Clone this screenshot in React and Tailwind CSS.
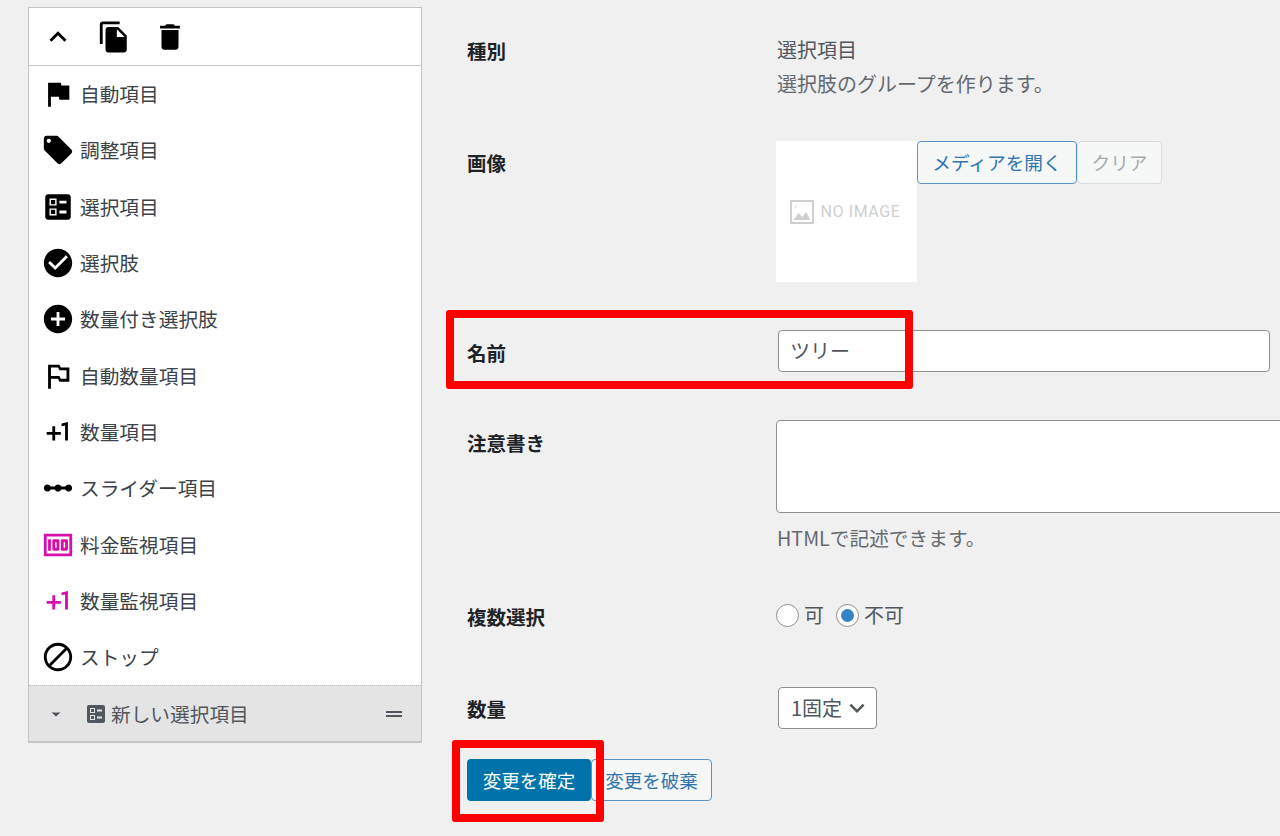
const P = {
  flag: "M14.4 6L14 4H5v17h2v-7h5.6l.4 2h7V6z",
  tag: "M21.41 11.58l-9-9C12.05 2.22 11.55 2 11 2H4c-1.1 0-2 .9-2 2v7c0 .55.22 1.05.59 1.42l9 9c.36.36.86.58 1.41.58.55 0 1.05-.22 1.41-.59l7-7c.37-.36.59-.86.59-1.41 0-.55-.23-1.06-.59-1.42zM5.5 7C4.67 7 4 6.33 4 5.5S4.67 4 5.5 4 7 4.67 7 5.5 6.33 7 5.5 7z",
  ballot: "M13 9.5h5v-2h-5v2zm0 7h5v-2h-5v2zm6 4.5H5c-1.1 0-2-.9-2-2V5c0-1.1.9-2 2-2h14c1.1 0 2 .9 2 2v14c0 1.1-.9 2-2 2zM6 11h5V6H6v5zm1-4h3v3H7V7zM6 18h5v-5H6v5zm1-4h3v3H7v-3z",
  check: "M12 2C6.48 2 2 6.48 2 12s4.48 10 10 10 10-4.48 10-10S17.52 2 12 2zm-2 15l-5-5 1.41-1.41L10 14.17l7.59-7.59L19 8l-9 9z",
  add: "M12 2C6.48 2 2 6.48 2 12s4.48 10 10 10 10-4.48 10-10S17.52 2 12 2zm5 11h-4v4h-2v-4H7v-2h4V7h2v4h4v2z",
  outlinedFlag: "M14 6l-1-2H5v17h2v-7h5l1 2h7V6h-6zm4 8h-4l-1-2H7V6h5l1 2h5v6z",
  plusOne: "M10 8H8v4H4v2h4v4h2v-4h4v-2h-4zm4.5-1.92V7.9l2.5-.5V18h2V5z",
  scale: "M19.5 9.5c-1.03 0-1.9.62-2.29 1.5h-2.92c-.39-.88-1.26-1.5-2.29-1.5s-1.9.62-2.29 1.5H6.79c-.39-.88-1.26-1.5-2.29-1.5C3.12 9.5 2 10.62 2 12s1.12 2.5 2.5 2.5c1.03 0 1.9-.62 2.29-1.5h2.92c.39.88 1.26 1.5 2.29 1.5s1.9-.62 2.29-1.5h2.92c.39.88 1.26 1.5 2.29 1.5 1.38 0 2.5-1.12 2.5-2.5s-1.12-2.5-2.5-2.5z",
  money: "M5 8h2v8H5zm7 0H9c-.55 0-1 .45-1 1v6c0 .55.45 1 1 1h3c.55 0 1-.45 1-1V9c0-.55-.45-1-1-1zm-1 6h-1v-4h1v4zm7-6h-3c-.55 0-1 .45-1 1v6c0 .55.45 1 1 1h3c.55 0 1-.45 1-1V9c0-.55-.45-1-1-1zm-1 6h-1v-4h1v4zM2 4v16h20V4H2zm2 14V6h16v12H4z",
  block: "M12 2C6.48 2 2 6.48 2 12s4.48 10 10 10 10-4.48 10-10S17.52 2 12 2zM4 12c0-4.42 3.58-8 8-8 1.85 0 3.55.63 4.9 1.69L5.69 16.9C4.63 15.55 4 13.85 4 12zm8 8c-1.85 0-3.55-.63-4.9-1.69L18.31 7.1C19.37 8.45 20 10.15 20 12c0 4.42-3.58 8-8 8z",
  copy: "M16 1H4c-1.1 0-2 .9-2 2v14h2V3h12V1zm-1 4l6 6v10c0 1.1-.9 2-2 2H7.99C6.89 23 6 22.1 6 21l.01-14c0-1.1.89-2 1.99-2h7zm-1 7h5.5L14 6.5V12z",
  trash: "M6 19c0 1.1.9 2 2 2h8c1.1 0 2-.9 2-2V7H6v12zM19 4h-3.5l-1-1h-5l-1 1H5v2h14V4z",
  chevronUp: "M12 8l-6 6 1.41 1.41L12 10.83l4.59 4.58L18 14z",
  chevronDown: "M7.41 8.59L12 13.17l4.59-4.58L18 10l-6 6-6-6z",
};

function Icon({ d, className = "w-[34px] h-[34px] text-black" }) {
  return (
    <svg viewBox="0 0 24 24" className={className} fill="currentColor" fillRule="evenodd">
      <path d={d} />
    </svg>
  );
}

const items = [
  [P.flag, "自動項目"],
  [P.tag, "調整項目"],
  [P.ballot, "選択項目"],
  [P.check, "選択肢"],
  [P.add, "数量付き選択肢"],
  [P.outlinedFlag, "自動数量項目"],
  [P.plusOne, "数量項目"],
  [P.scale, "スライダー項目"],
  [P.money, "料金監視項目", true],
  [P.plusOne, "数量監視項目", true],
  [P.block, "ストップ"],
];

function Row({ label, labelClass, className = "", children }) {
  return (
    <div className={`grid grid-cols-[309px_520px] ${className}`}>
      <div className={`font-bold text-[19.5px] text-[#1d2327] ${labelClass}`}>{label}</div>
      <div>{children}</div>
    </div>
  );
}

export default function App() {
  return (
    <div
      className="relative flex w-[1280px] h-[836px] overflow-hidden bg-[#f0f0f1] text-[20px] leading-[34px] text-[#50575e]"
      style={{ fontFamily: '"Noto Sans CJK JP", "Noto Sans", sans-serif' }}
    >
      {/* left panel */}
      <div className="ml-[28px] mt-[7px] w-[394px] h-[736px] border border-[#c3c4c7] border-b-2 bg-white flex flex-col shrink-0 text-[19.7px]">
        <div className="flex items-center h-[58px] px-px border-b border-[#c9c9c9] shrink-0">
          <div className="w-[56px] flex justify-center"><Icon d={P.chevronUp} /></div>
          <div className="w-[56px] flex justify-center"><Icon d={P.copy} /></div>
          <div className="w-[56px] flex justify-center"><Icon d={P.trash} /></div>
        </div>
        <div className="flex flex-col">
          {items.map(([d, label, pink]) => (
            <div key={label} className="flex items-center h-[56.3px] pl-[12px] gap-[5px] text-[#3c434a]">
              <Icon d={d} className={`w-[34px] h-[34px] ${pink ? "text-[#d80ea8]" : "text-black"}`} />
              <span>{label}</span>
            </div>
          ))}
        </div>
        <div className="flex-1 flex items-center bg-[#e4e4e4] border-t border-dotted border-[#bdbdbd] pl-[22px] pr-[19px] text-[#50575e]">
          <svg viewBox="0 0 10 6" className="w-[10px] h-[6px] text-[#50575e]" fill="currentColor">
            <path d="M0.5 1.5h9L5 5.5z" />
          </svg>
          <Icon d={P.ballot} className="w-[24px] h-[24px] ml-[23px] text-[#50575e]" />
          <span className="ml-[3px]">新しい選択項目</span>
          <svg viewBox="0 0 16 6" className="w-[16px] h-[6px] ml-auto text-[#50575e]" fill="currentColor">
            <rect x="0" y="0" width="16" height="2" />
            <rect x="0" y="4" width="16" height="2" />
          </svg>
        </div>
      </div>

      {/* form */}
      <div className="ml-[45px] pt-[33px] flex flex-col">
        <Row label="種別" labelClass="pt-px">
          <div className="ml-px">選択項目</div>
          <div className="ml-px text-[#646970]">選択肢のグループを作ります。</div>
        </Row>
        <Row label="画像" labelClass="pt-[5px]" className="mt-[40px]">
          <div className="flex items-start">
            <div className="w-[141px] h-[141px] pr-[3px] bg-white flex items-center justify-center gap-[7px] text-[#cfcfcf] shrink-0">
              <svg viewBox="0 0 24 24" className="w-[24px] h-[24px]" fill="currentColor" fillRule="evenodd">
                <path d="M0 0h24v24H0zM2 2v20h20V2zM3.5 20l5-7 4 4 3.5-5 4.5 8zM5 7a2.5 2.5 0 0 1 3-2.2A3 3 0 0 0 6 8.5 2 2 0 0 1 5 7z" />
              </svg>
              <span className="text-[16px] tracking-[0.6px] font-normal mt-px" style={{ fontFamily: "Roboto, sans-serif" }}>NO IMAGE</span>
            </div>
            <button className="w-[160px] h-[43px] border border-[#5b94c4] rounded-[4px] bg-[#f6f7f7] text-[#2f75ad] text-[18.7px] leading-none">メディアを開く</button>
            <button className="w-[85px] h-[43px] border border-[#dcdcde] rounded-[4px] bg-[#f6f7f7] text-[#a7aaad] text-[18.7px] leading-none">クリア</button>
          </div>
        </Row>
        <Row label="名前" labelClass="pt-[6px]" className="mt-[48px]">
          <div className="ml-[2px] w-[492px] h-[42px] border border-[#8c8f94] rounded-[4px] bg-white flex items-center px-[11px]">ツリー</div>
        </Row>
        <Row label="注意書き" labelClass="pt-[6px]" className="mt-[48px]">
          <div className="h-[93px] border border-[#8c8f94] rounded-[4px] bg-white" />
          <div className="ml-px mt-[8px] text-[19.7px] text-[#646970]">HTMLで記述できます。</div>
        </Row>
        <Row label="複数選択" labelClass="pt-[2px]" className="mt-[43px]">
          <div className="flex items-center h-[34px]">
            <span className="w-[23px] h-[23px] rounded-full border border-[#8c8f94] bg-white shrink-0" />
            <span className="ml-[5px]">可</span>
            <span className="ml-[12px] w-[23px] h-[23px] rounded-full border border-[#8c8f94] bg-white shrink-0 flex items-center justify-center">
              <span className="w-[13px] h-[13px] rounded-full bg-[#3582c4]" />
            </span>
            <span className="ml-[5px]">不可</span>
          </div>
        </Row>
        <Row label="数量" labelClass="pt-[5px]" className="mt-[53px]">
          <div className="ml-[2px] w-[99px] h-[42px] border border-[#8c8f94] rounded-[4px] bg-white flex items-center pl-[12px]">
            <span>1固定</span>
            <Icon d={P.chevronDown} className="w-[30px] h-[30px] text-[#50575e]" />
          </div>
        </Row>
        <div className="mt-[30px] flex">
          <button className="w-[124px] h-[42px] rounded-[4px] bg-[#0073aa] text-white text-[18.5px] leading-none">変更を確定</button>
          <button className="w-[121px] h-[42px] rounded-[4px] border border-[#5b94c4] bg-[#f6f7f7] text-[#2f75ad] text-[18.5px] leading-none">変更を破棄</button>
        </div>
      </div>

      {/* red annotation boxes */}
      <div className="absolute left-[446px] top-[310px] w-[467px] h-[79px] border-[8px] border-[#ff0000] rounded-[3px]" />
      <div className="absolute left-[452px] top-[740px] w-[152px] h-[82px] border-[8px] border-[#ff0000] rounded-[3px]" />
    </div>
  );
}
